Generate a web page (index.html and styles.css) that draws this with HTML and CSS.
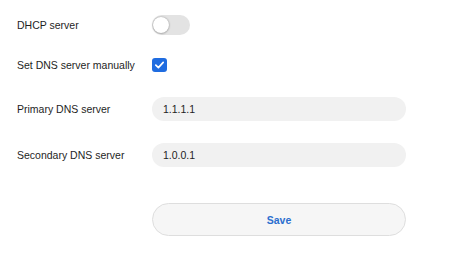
FILE: index.html
```html
<!DOCTYPE html>
<html lang="en">
<head>
  <meta charset="UTF-8" />
  <title>Network settings</title>
  <link rel="stylesheet" href="styles.css">
</head>
<body>
  <form class="settings">
    <div class="row row-dhcp">
      <span class="label">DHCP server</span>
      <label class="switch">
        <input type="checkbox">
        <span class="knob"></span>
      </label>
    </div>

    <div class="row row-manual">
      <span class="label">Set DNS server manually</span>
      <label class="check">
        <svg width="15" height="14" viewBox="0 0 15 14">
          <rect x="0" y="0" width="15" height="14" rx="3" fill="#1f6ce0"/>
          <path d="M3.8 7.2 L6.4 9.6 L11.2 4.4" fill="none" stroke="#fff" stroke-width="1.7" stroke-linecap="round" stroke-linejoin="round"/>
        </svg>
      </label>
    </div>

    <div class="row row-primary">
      <label class="label" for="dns1">Primary DNS server</label>
      <input id="dns1" class="field" type="text" value="1.1.1.1">
    </div>

    <div class="row row-secondary">
      <label class="label" for="dns2">Secondary DNS server</label>
      <input id="dns2" class="field" type="text" value="1.0.0.1">
    </div>

    <div class="row row-save">
      <span class="label"></span>
      <button type="button" class="save-btn">Save</button>
    </div>
  </form>
</body>
</html>
```

FILE: styles.css
```css
/* base */
* {
  margin: 0;
  padding: 0;
  box-sizing: border-box;
}
body {
  background: #fff;
  font-family: 'Liberation Sans', Arial, sans-serif;
  font-size: 10.5px;
  color: #1e1e1e;
  padding: 15px 0 0 17px;
}

/* form rows */
.settings {
  display: flex;
  flex-direction: column;
}
.row {
  display: flex;
  align-items: center;
}
.label {
  width: 135px;
  flex-shrink: 0;
}
.row-dhcp { height: 20px; }
.row-manual { height: 14px; margin-top: 23px; }
.row-primary { height: 24px; margin-top: 25px; }
.row-secondary { height: 24px; margin-top: 22px; }
.row-save { height: 33px; margin-top: 36px; }

/* toggle */
.switch {
  position: relative;
  width: 38px;
  height: 20px;
  border-radius: 10px;
  background: #e3e3e3;
  display: inline-block;
}
.switch input {
  display: none;
}
.knob {
  position: absolute;
  top: 2px;
  left: 1px;
  width: 16px;
  height: 16px;
  border-radius: 50%;
  background: #fff;
  box-shadow: 0 0 2px rgba(0,0,0,0.35), 0 1px 2px rgba(0,0,0,0.15);
}

/* checkbox */
.check {
  display: flex;
  width: 15px;
  height: 14px;
}

/* inputs */
.field {
  width: 254px;
  height: 24px;
  border: none;
  border-radius: 12px;
  background: #f1f1f1;
  padding: 0 11px;
  font-family: inherit;
  font-size: 10.5px;
  color: #1e1e1e;
  outline: none;
}

/* save */
.save-btn {
  width: 254px;
  height: 33px;
  border: 1px solid #dedede;
  border-radius: 17px;
  background: #f6f6f6;
  color: #2b6fcf;
  font-family: inherit;
  font-size: 10.5px;
  font-weight: 700;
  cursor: pointer;
}
```
